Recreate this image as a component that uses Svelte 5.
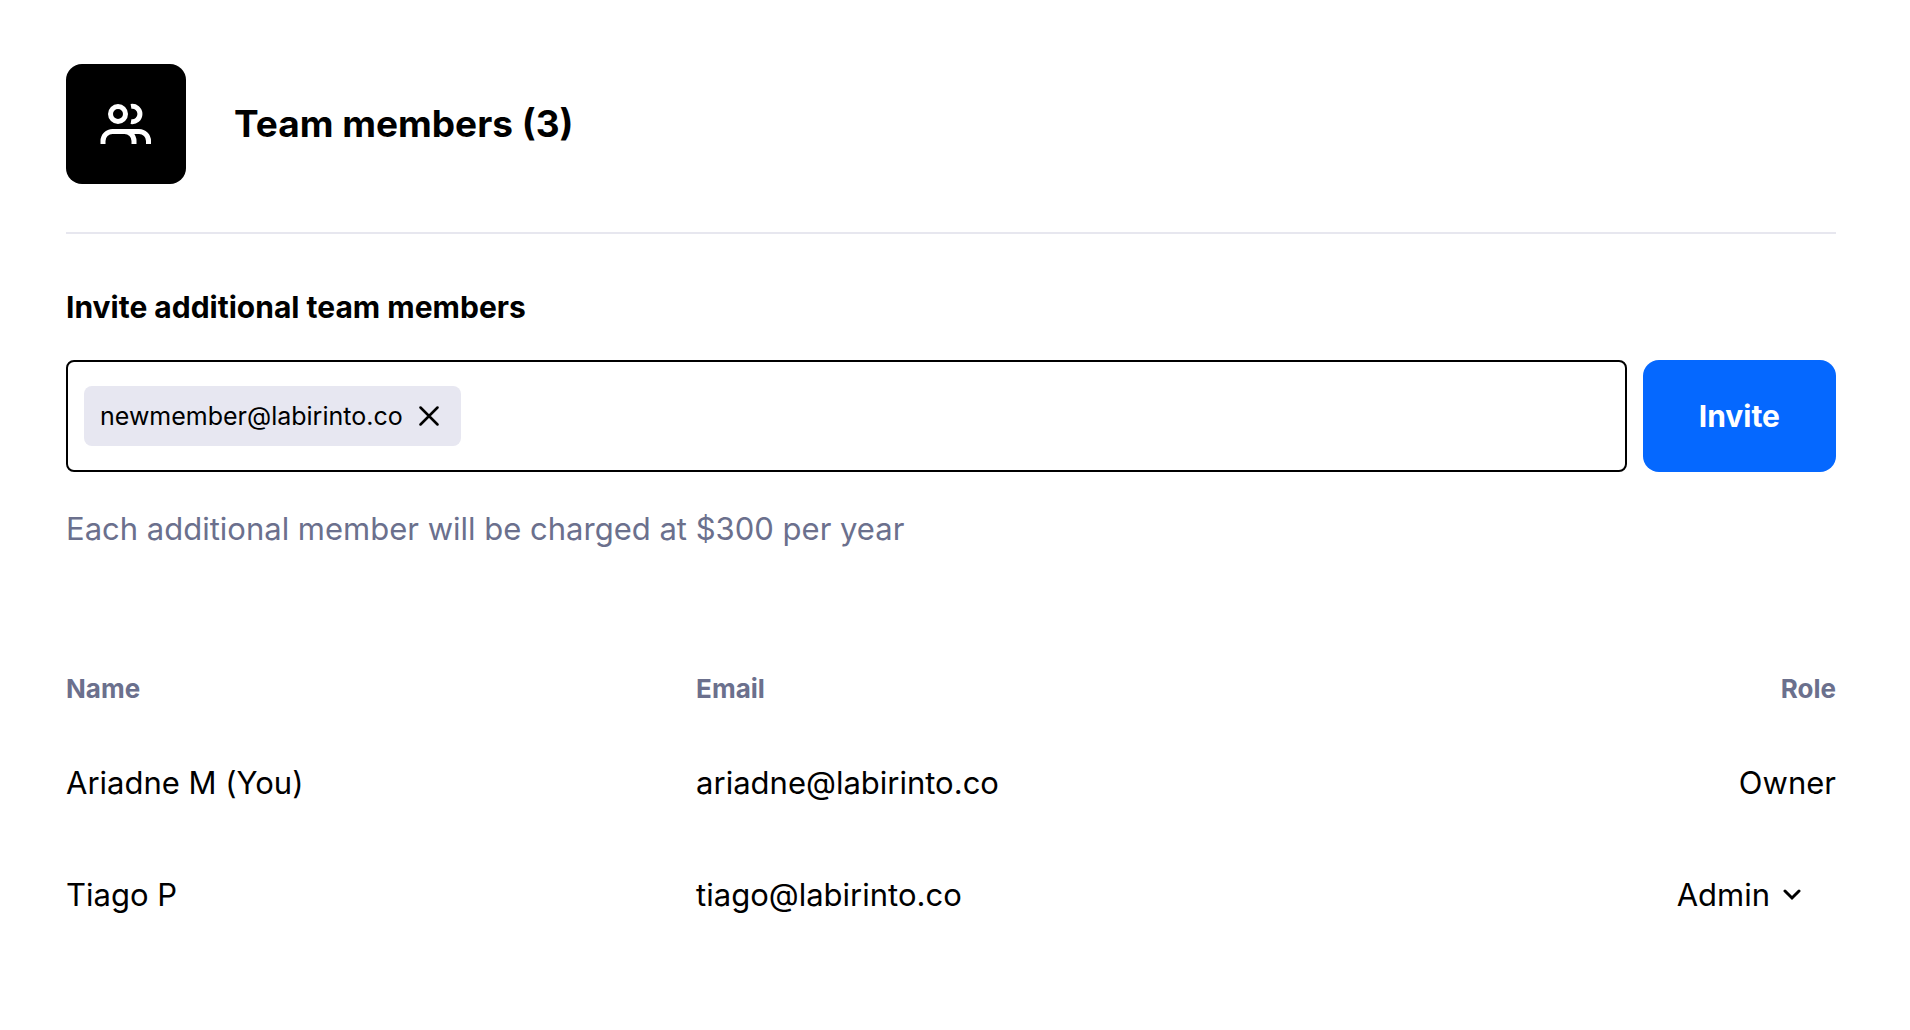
<script>
  let draft = $state("");
  let invites = $state(["newmember@labirinto.co"]);
  let members = $state([
    { name: "Ariadne M", email: "ariadne@labirinto.co", role: "Owner", you: true },
    { name: "Tiago P", email: "tiago@labirinto.co", role: "Admin" },
  ]);

  const roles = ["Admin", "Editor", "Viewer"];

  // pending invites count towards the team size
  let total = $derived(members.length + invites.length);

  function addInvite() {
    const email = draft.trim();
    if (email && !invites.includes(email)) {
      invites.push(email);
    }
    draft = "";
  }

  function removeInvite(email) {
    invites = invites.filter((invite) => invite !== email);
  }

  function onKeydown(event) {
    if (event.key === "Enter" || event.key === ",") {
      event.preventDefault();
      addInvite();
    }
  }
</script>

<main>
  <header>
    <span class="badge">
      <svg viewBox="0 0 60 60" fill="none" stroke="currentColor" stroke-width="5">
        <circle cx="22" cy="20" r="7.5" />
        <path d="M35 12.4a7.7 7.7 0 1 1 0 15.2" />
        <path d="M7 50v-3a9.5 9.5 0 0 1 9.5-9.5h12a9.5 9.5 0 0 1 9.5 9.5v3" />
        <path d="M28 37.5h15a9.5 9.5 0 0 1 9.5 9.5v3" />
      </svg>
    </span>
    <h1>Team members ({total})</h1>
  </header>

  <form onsubmit={(event) => event.preventDefault()}>
    <label for="invite-email">Invite additional team members</label>
    <div class="invite">
      <div class="field">
        {#each invites as email (email)}
          <span class="chip">
            {email}
            <button type="button" aria-label="Remove {email}" onclick={() => removeInvite(email)}>
              <svg viewBox="0 0 20 20" fill="none" stroke="currentColor" stroke-width="2.5" stroke-linecap="round">
                <path d="M1.5 1.5l17 17M18.5 1.5l-17 17" />
              </svg>
            </button>
          </span>
        {/each}
        <input id="invite-email" type="email" bind:value={draft} onkeydown={onKeydown} />
      </div>
      <button class="submit" type="submit" onclick={addInvite}>Invite</button>
    </div>
    <p>Each additional member will be charged at $300 per year</p>
  </form>

  <table>
    <colgroup>
      <col class="wide" />
      <col class="wide" />
      <col />
    </colgroup>
    <thead>
      <tr>
        <th>Name</th>
        <th>Email</th>
        <th class="role">Role</th>
      </tr>
    </thead>
    <tbody>
      {#each members as member (member.email)}
        <tr>
          <td>{member.name}{member.you ? " (You)" : ""}</td>
          <td>{member.email}</td>
          <td class="role">
            {#if member.role === "Owner"}
              Owner
            {:else}
              <span class="picker">
                <select bind:value={member.role} aria-label="Role of {member.name}">
                  {#each roles as role}
                    <option>{role}</option>
                  {/each}
                </select>
                <svg viewBox="0 0 18 12" fill="none" stroke="currentColor" stroke-width="3" stroke-linecap="round">
                  <path d="M2 2l7 7l7-7" />
                </svg>
              </span>
            {/if}
          </td>
        </tr>
      {/each}
    </tbody>
  </table>
</main>

<style>
  :global(body) {
    background: #fff;
  }
  main {
    padding: 64px 74px 64px 66px;
    color: #000;
    font-family: Inter, "Liberation Sans", sans-serif;
    font-size: 31px;
    line-height: 40px;
  }
  header {
    display: flex;
    align-items: center;
    gap: 48px;
    padding-bottom: 48px;
    border-bottom: 2px solid #e7e7ef;
  }
  .badge {
    display: grid;
    place-items: center;
    width: 120px;
    height: 120px;
    border-radius: 16px;
    background: #000;
    color: #fff;
  }
  .badge svg {
    width: 60px;
    height: 60px;
  }
  h1 {
    margin: 0;
    font-size: 37px;
    font-weight: 700;
    line-height: 48px;
  }
  form {
    padding-top: 53px;
  }
  label {
    display: block;
    margin-bottom: 33px;
    font-size: 30px;
    font-weight: 700;
  }
  .invite {
    display: flex;
    gap: 16px;
  }
  .field {
    display: flex;
    flex: 1;
    align-items: center;
    gap: 12px;
    box-sizing: border-box;
    min-height: 112px;
    padding: 16px;
    border: 2px solid #000;
    border-radius: 8px;
  }
  .chip {
    display: flex;
    align-items: center;
    gap: 10px;
    height: 60px;
    padding: 0 16px;
    border-radius: 8px;
    background: #e7e7f1;
    font-size: 25px;
  }
  .chip button {
    display: grid;
    place-items: center;
    width: 32px;
    height: 32px;
    padding: 0;
    border: 0;
    background: none;
    color: inherit;
    cursor: pointer;
  }
  .chip svg {
    width: 20px;
    height: 20px;
  }
  input {
    flex: 1;
    min-width: 0;
    padding: 0;
    border: 0;
    outline: 0;
    background: none;
    font: inherit;
  }
  .submit {
    padding: 0 56px;
    border: 0;
    border-radius: 16px;
    background: #0568ff;
    color: #fff;
    font: inherit;
    font-size: 30px;
    font-weight: 700;
    cursor: pointer;
  }
  p {
    margin: 37px 0 0;
    color: #6b708d;
  }
  table {
    width: 100%;
    margin-top: 120px;
    border-collapse: collapse;
    table-layout: fixed;
  }
  .wide {
    width: 35.6%;
  }
  th,
  td {
    padding: 0;
    text-align: left;
  }
  th {
    height: 58px;
    color: #6b708d;
    font-size: 26px;
    font-weight: 700;
    vertical-align: top;
  }
  td {
    height: 112px;
  }
  .role {
    text-align: right;
  }
  .picker {
    display: inline-grid;
    align-items: center;
    justify-items: end;
  }
  .picker select,
  .picker svg {
    grid-area: 1 / 1;
  }
  select {
    appearance: none;
    field-sizing: content;
    padding: 0 66px 0 0;
    border: 0;
    background: none;
    color: inherit;
    font: inherit;
    cursor: pointer;
  }
  .picker svg {
    width: 18px;
    height: 12px;
    margin-right: 35px;
    pointer-events: none;
  }
</style>
